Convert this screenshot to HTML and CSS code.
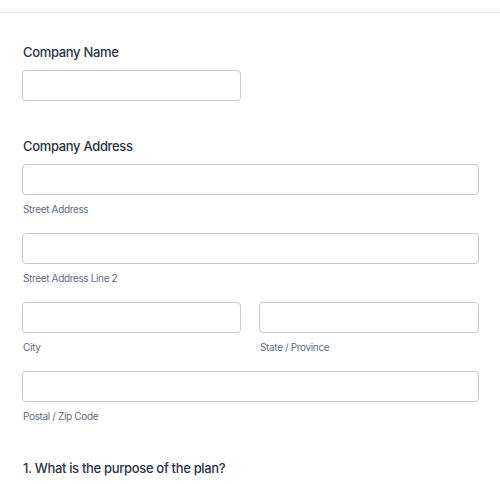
FILE: index.html
```html
<!DOCTYPE html>
<html lang="en">
<head>
    <meta charset="UTF-8">
    <meta name="viewport" content="width=device-width, initial-scale=1.0">
    <title>Company Form</title>
    <link rel="stylesheet" href="styles.css">
</head>
<body>
    <div class="topline"></div>
    <form class="form">
        <div class="field">
            <label class="label">Company Name</label>
            <div class="row">
                <div class="col">
                    <input class="input" type="text">
                </div>
            </div>
        </div>
        <div class="field">
            <label class="label">Company Address</label>
            <div class="col">
                <input class="input" type="text">
                <div class="sublabel">Street Address</div>
            </div>
            <div class="col">
                <input class="input" type="text">
                <div class="sublabel">Street Address Line 2</div>
            </div>
            <div class="row">
                <div class="col">
                    <input class="input" type="text">
                    <div class="sublabel">City</div>
                </div>
                <div class="col">
                    <input class="input" type="text">
                    <div class="sublabel">State / Province</div>
                </div>
            </div>
            <div class="col">
                <input class="input" type="text">
                <div class="sublabel">Postal / Zip Code</div>
            </div>
        </div>
        <div class="field">
            <label class="label">1. What is the purpose of the plan?</label>
        </div>
    </form>
</body>
</html>
```

FILE: styles.css
```css
body,html{
    margin: 0;
    background: #fff;
    font-family: Inter, "Noto Sans", sans-serif;
    overflow: hidden;
}
.topline{
    height: 12px;
    border-bottom: 1px solid #e6e8ef;
}
.form{
    padding: 29px 21px 0 22px;
}
.field{
    margin-bottom: 35px;
}
.label{
    display: block;
    font-size: 13px;
    line-height: 20px;
    font-weight: 500;
    letter-spacing: -0.33px;
    color: #2c3345;
    margin-bottom: 8px;
    padding-left: 1px;
}
.row{
    display: grid;
    grid-template-columns: 219px 1fr;
    column-gap: 18px;
}
.col{
    display: flex;
    flex-direction: column;
}
.col + .col,
.col + .row,
.row + .col{
    margin-top: 17px;
}
.row .col{
    margin-top: 0;
}
.input{
    box-sizing: border-box;
    height: 31px;
    width: 100%;
    margin: 0;
    border: 1px solid #c5c9d8;
    border-radius: 4px;
    background: #fff;
    outline: none;
}
.sublabel{
    margin-top: 7px;
    font-size: 10px;
    line-height: 14px;
    letter-spacing: -0.35px;
    color: #5f6b82;
    padding-left: 1px;
}
```
